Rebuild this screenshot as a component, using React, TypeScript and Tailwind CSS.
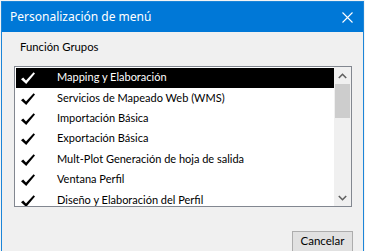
import React from "react";

const items = [
  "Mapping y Elaboración",
  "Servicios de Mapeado Web (WMS)",
  "Importación Básica",
  "Exportación Básica",
  "Mult-Plot Generación de hoja de salida",
  "Ventana Perfil",
  "Diseño y Elaboración del Perfil",
];

function Check({ color }: { color: string }) {
  return (
    <svg width="16" height="14" viewBox="0 0 16 14">
      <path
        d="M1 8.2 L3.2 6.6 L6 9.6 L13.6 1.2 L15 2.4 L6.2 13 Z"
        fill={color}
      />
    </svg>
  );
}

export default function App() {
  const font = { fontFamily: 'Lato, "Noto Sans", sans-serif' };
  return (
    <div className="w-[365px] h-[251px] overflow-hidden bg-[#f4f4f4] pl-[1px] pt-[1px]" style={font}>
      <div className="w-[363px] h-[260px] border border-[#1c85d8] bg-[#f0f0f0] flex flex-col">
        <div className="h-[30px] bg-[#0078d7] flex items-center justify-between pl-[8px] pr-[10px] shrink-0">
          <span className="text-white text-[12px] leading-none font-['Noto_Sans',sans-serif]">Personalización de menú</span>
          <svg width="11" height="11" viewBox="0 0 11 11">
            <path d="M0.5 0.5 L10.5 10.5 M10.5 0.5 L0.5 10.5" stroke="#ffffff" strokeWidth="1.1" />
          </svg>
        </div>
        <div className="pl-[18px] pt-[7px] text-[11.3px] leading-[16px] text-black h-[34px] shrink-0">Función Grupos</div>
        <div className="ml-[12px] w-[338px] h-[141px] border border-[#828790] bg-white flex shrink-0">
          <div className="flex-1 overflow-hidden pt-[1px] pl-[1px]">
            {items.map((t, i) => (
              <div
                key={t}
                className={
                  "h-[20.4px] flex items-center " +
                  (i === 0 ? "bg-black text-white" : "text-black")
                }
              >
                <div className="w-[41px] pl-[4px] flex items-center">
                  <Check color={i === 0 ? "#ffffff" : "#000000"} />
                </div>
                <span className="text-[11px] leading-none whitespace-nowrap pb-[3px]">{t}</span>
              </div>
            ))}
          </div>
          <div className="w-[17px] bg-[#f0f0f0] flex flex-col items-center">
            <div className="h-[17px] w-full flex items-center justify-center">
              <svg width="9" height="6" viewBox="0 0 9 6">
                <path d="M0.8 5 L4.5 1.3 L8.2 5" stroke="#606060" strokeWidth="1.6" fill="none" />
              </svg>
            </div>
            <div className="w-[15px] h-[34px] bg-[#cdcdcd]" />
            <div className="flex-1" />
            <div className="h-[17px] w-full flex items-center justify-center">
              <svg width="9" height="6" viewBox="0 0 9 6">
                <path d="M0.8 1 L4.5 4.7 L8.2 1" stroke="#606060" strokeWidth="1.6" fill="none" />
              </svg>
            </div>
          </div>
        </div>
        <div className="flex justify-end pr-[10px] pt-[24px]">
          <div className="w-[61px] h-[22px] bg-[#e1e1e1] border border-[#adadad] flex items-center justify-center text-[11.5px] text-black leading-none pb-[2px]">
            Cancelar
          </div>
        </div>
      </div>
    </div>
  );
}
